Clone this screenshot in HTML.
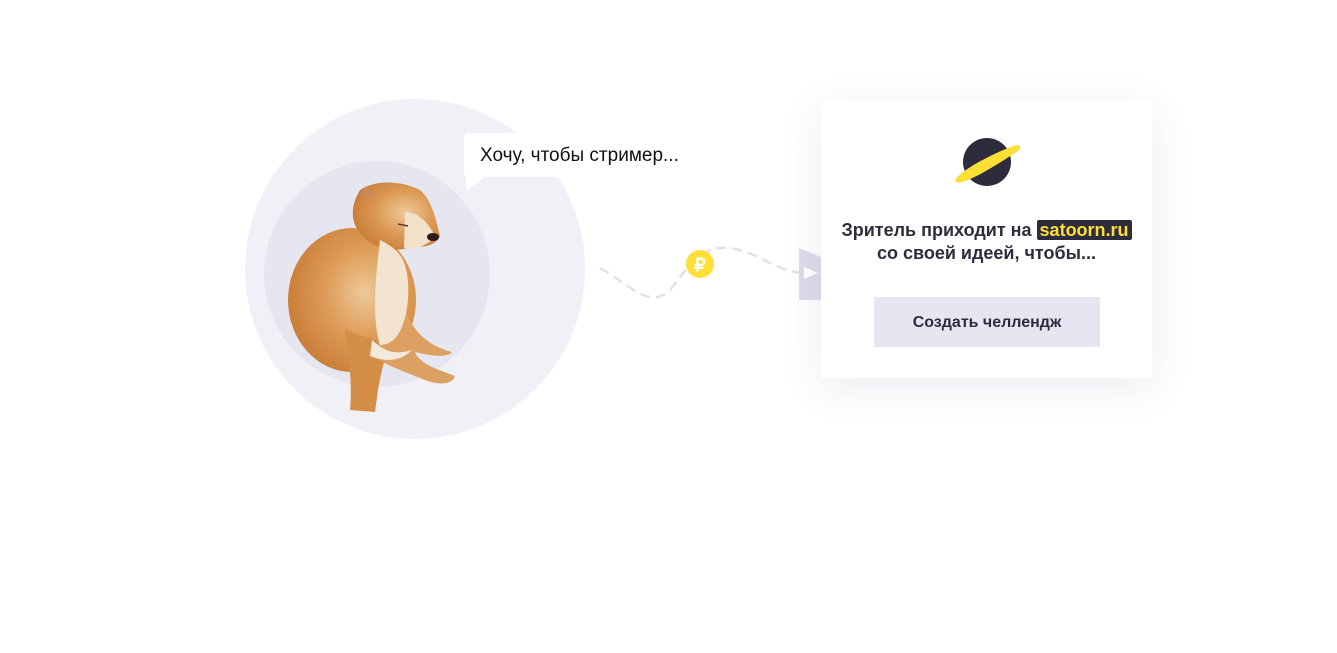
<!DOCTYPE html>
<html><head><meta charset="utf-8"><style>
html,body{margin:0;padding:0;background:#fff;width:1337px;height:653px;overflow:hidden;font-family:"Liberation Sans",sans-serif}
.abs{position:absolute}
</style></head><body>
<div class="abs" style="left:245px;top:99px;width:340px;height:340px;border-radius:50%;background:#f0f0f6"></div>
<div class="abs" style="left:264px;top:161px;width:226px;height:226px;border-radius:50%;background:#e6e6f1"></div>
<svg class="abs" style="left:0;top:0" width="1337" height="653">
<defs>
<radialGradient id="fur" cx="0.6" cy="0.45" r="0.65"><stop offset="0" stop-color="#eec99a"/><stop offset="0.5" stop-color="#dc9a55"/><stop offset="1" stop-color="#c77a35"/></radialGradient>
</defs>
<ellipse cx="352" cy="300" rx="64" ry="72" fill="url(#fur)"/>
<path d="M345,330 C350,360 352,390 350,410 L375,412 C378,390 380,370 390,345 Z" fill="#d48e48"/>
<path d="M400,300 C412,330 425,345 452,352 C448,358 430,356 415,352 C420,365 440,370 455,376 C452,386 435,385 420,378 C400,370 385,365 372,355 Z" fill="#dca063"/>
<path d="M360,190 C375,180 400,180 420,190 C432,200 436,220 440,236 C436,246 422,248 412,246 C400,252 385,250 375,245 C355,235 345,215 360,190 Z" fill="url(#fur)"/>
<path d="M405,212 C418,212 428,222 435,236 C428,246 414,250 404,248 Z" fill="#f1e1c9"/>
<path d="M380,240 C400,250 410,260 408,300 C405,330 395,345 380,345 C372,320 375,280 380,240 Z" fill="#f3e4cf"/>
<path d="M372,340 C385,352 395,355 412,350 C400,362 385,362 370,356 Z" fill="#f3eadc"/>
<path d="M360,195 L366,186 L376,196 Z" fill="#c98a5a"/>
<ellipse cx="433" cy="237" rx="6" ry="4" fill="#2a1d18"/>
<path d="M398,224 L408,226" stroke="#5a3a28" stroke-width="1.5"/>
<path d="M600,268 C630,285 650,310 670,290 C690,265 700,245 730,248 C760,252 780,275 808,273" fill="none" stroke="#e1e1eb" stroke-width="2.5" stroke-dasharray="10 6"/>
<polygon points="799,248 821,257 821,300 799,300" fill="#dcdcea"/>
<polygon points="804,267 818,273 804,279" fill="#fff"/>
<circle cx="700" cy="264" r="14" fill="#fddf35"/>
<text x="700" y="271" text-anchor="middle" font-family="Liberation Sans" font-size="18" font-weight="bold" fill="#fff">₽</text>
<path d="M466,177 L466,192 L484,177 Z" fill="#fff"/>
</svg>
<div class="abs" style="left:464px;top:133px;width:241px;height:44px;background:#fff;border-radius:4px;font-size:19px;line-height:46px;color:#111;text-indent:16px">Хочу, чтобы стример...</div>
<div class="abs" style="left:821px;top:100px;width:331px;height:278px;background:#fff;box-shadow:0 10px 40px rgba(60,60,100,0.09)">
<svg class="abs" style="left:130px;top:36px" width="70" height="54">
<circle cx="36" cy="26" r="24" fill="#2e2c3c"/>
<path d="M5,46 C0,40 36,20 62,10 C72,7 71,13 64,17 C44,30 12,50 5,46 Z" fill="#fddf35"/>
</svg>
<div class="abs" style="left:0;top:119px;width:331px;text-align:center;font-size:18px;font-weight:bold;color:#2e2c3c;line-height:23px">Зритель приходит на <span style="background:#2e2c3c;color:#fddf35;padding:0 3px;border-radius:2px">satoorn.ru</span><br>со своей идеей, чтобы...</div>
<div class="abs" style="left:53px;top:197px;width:226px;height:50px;background:#e6e6f2;font-size:16px;font-weight:bold;color:#2e2c3c;text-align:center;line-height:52px">Создать челлендж</div>
</div>
</body></html>
